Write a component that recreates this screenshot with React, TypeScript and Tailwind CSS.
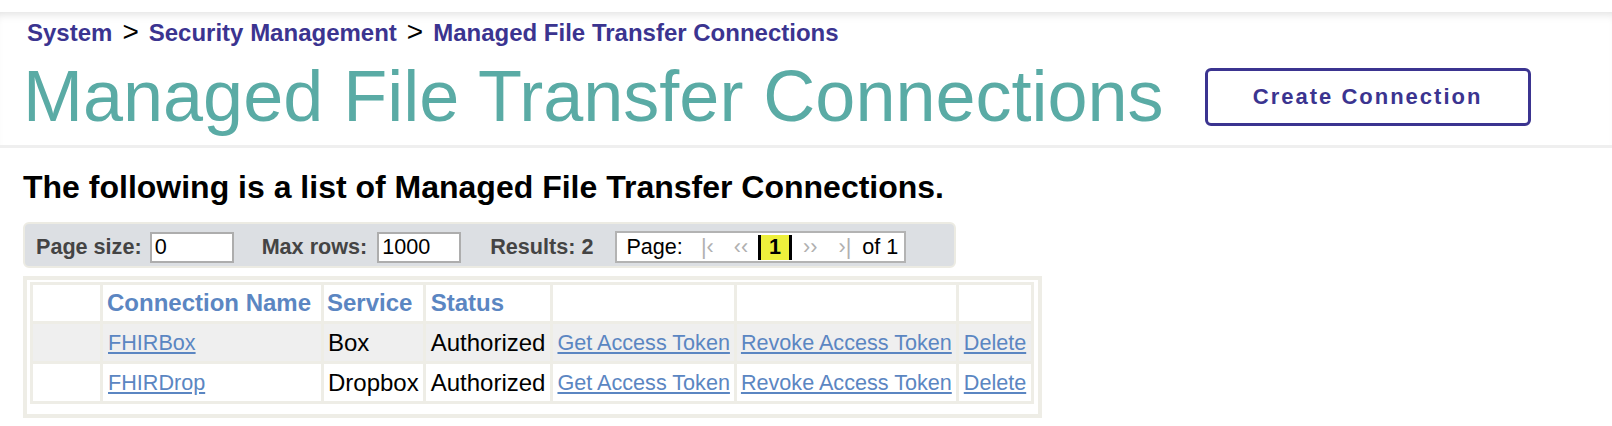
type Connection = {
  id: string;
  name: string;
  service: string;
  status: string;
};

const connections: Connection[] = [
  { id: '1', name: 'FHIRBox', service: 'Box', status: 'Authorized' },
  { id: '2', name: 'FHIRDrop', service: 'Dropbox', status: 'Authorized' },
];

function Crumb({ label }: { label: string }) {
  return <a className="text-[#3b3490] font-bold">{label}</a>;
}

function Sep() {
  return <span className="mx-[10px] text-[28px] leading-[20px] font-normal text-black">&gt;</span>;
}

export default function App() {
  return (
    <div className="min-h-[426px] bg-white font-['Liberation_Sans',Arial,sans-serif] text-black">
      <div className="h-3 bg-white" />
      <header className="pl-[27px] pt-[7px] pb-[7px] border-b-[3px] border-[#efefef] shadow-[inset_0_8px_10px_-6px_rgba(0,0,0,0.13)]">
        <nav className="text-[24px] leading-[28px] flex items-baseline">
          <Crumb label="System" />
          <Sep />
          <Crumb label="Security Management" />
          <Sep />
          <Crumb label="Managed File Transfer Connections" />
        </nav>
        <div className="mt-[8px] flex items-center">
          <h1 className="ml-[-4px] text-[72px] leading-[83px] text-[#5aaba5] font-normal">
            Managed File Transfer Connections
          </h1>
          <button className="ml-[41px] w-[326px] h-[58px] border-[3px] border-[#3b3490] rounded-[6px] bg-white text-[#3b3490] text-[22px] font-bold tracking-[2px]">
            Create Connection
          </button>
        </div>
      </header>

      <main className="px-[23px]">
        <h2 className="mt-[21px] text-[32px] leading-[37px] font-bold">
          The following is a list of Managed File Transfer Connections.
        </h2>

        <div className="mt-[16px] w-[933px] h-[46px] rounded-[6px] border-2 border-[#ecebe3] bg-[#dcdfe3] pl-[11px] pt-[7px] flex items-baseline text-[21.6px] text-[#444] font-bold">
          <span>Page size:</span>
          <input
            readOnly
            value="0"
            className="ml-[8px] w-[84px] h-[31px] border-2 border-[#adadad] bg-white px-[3px] text-[21.6px] font-normal text-black outline-none"
          />
          <span className="ml-[28px]">Max rows:</span>
          <input
            readOnly
            value="1000"
            className="ml-[10px] w-[84px] h-[31px] border-2 border-[#adadad] bg-white px-[3px] text-[21.6px] font-normal text-black outline-none"
          />
          <span className="ml-[29px]">Results: 2</span>
          <div className="ml-[22px] w-[291px] h-[32px] border-2 border-[#b3b3b3] bg-white pl-[9px] flex items-center font-normal text-black">
            <span>Page:</span>
            <span className="ml-[18px] text-[#b0b0b0]">|‹</span>
            <span className="ml-[20px] text-[#b0b0b0]">‹‹</span>
            <span className="ml-[10px] w-[34px] h-[25px] flex items-center justify-center bg-[#eef03c] border-x-[3px] border-black font-bold leading-none">
              1
            </span>
            <span className="ml-[11px] text-[#b0b0b0]">››</span>
            <span className="ml-[21px] text-[#b0b0b0]">›|</span>
            <span className="ml-[11px]">of 1</span>
          </div>
        </div>

        <div className="mt-[8px] w-fit border-4 border-[#eeede6] bg-white pt-[2px] pb-[10px] pl-[3px] pr-[4px]">
          <table className="border-separate border-spacing-[3px] bg-[#eeede6] text-[24px] leading-[28px] whitespace-nowrap">
            <thead>
              <tr className="h-[36px] bg-white text-left text-[#5b86c2] font-bold">
                <th className="w-[67px] bg-white" />
                <th className="w-[218px] px-[4px]">Connection Name</th>
                <th className="w-[97px] px-[3px]">Service</th>
                <th className="w-[123px] px-[5px]">Status</th>
                <th />
                <th />
                <th />
              </tr>
            </thead>
            <tbody>
              {connections.map((c, i) => (
                <tr key={c.id} className={i % 2 === 0 ? 'h-[37px] bg-[#efefef]' : 'h-[37px] bg-white'}>
                  <td />
                  <td className="px-[5px]">
                    <a className="text-[21.6px] text-[#5b86c2] underline">{c.name}</a>
                  </td>
                  <td className="px-[4px]">{c.service}</td>
                  <td className="px-[5px]">{c.status}</td>
                  <td className="px-[4px]">
                    <a className="text-[21.6px] text-[#5b86c2] underline">Get Access Token</a>
                  </td>
                  <td className="px-[4px]">
                    <a className="text-[21.6px] text-[#5b86c2] underline">Revoke Access Token</a>
                  </td>
                  <td className="px-[5px]">
                    <a className="text-[21.6px] text-[#5b86c2] underline">Delete</a>
                  </td>
                </tr>
              ))}
            </tbody>
          </table>
        </div>
      </main>
    </div>
  );
}
